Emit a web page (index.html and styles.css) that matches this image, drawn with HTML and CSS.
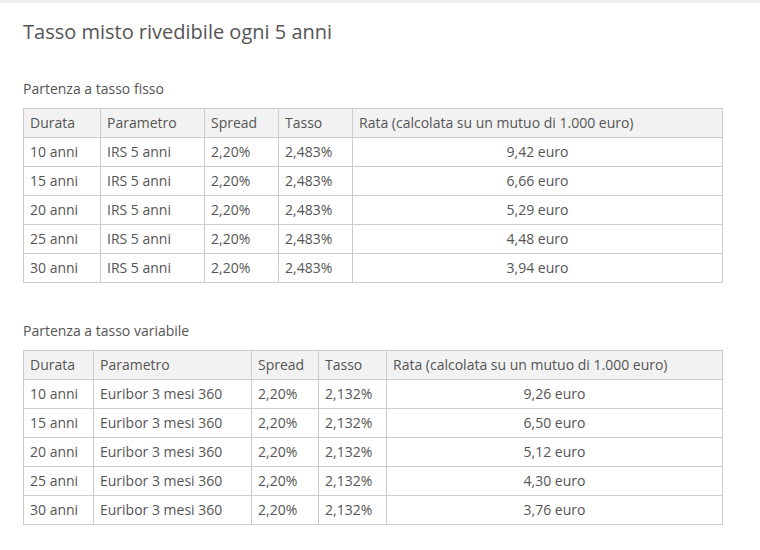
FILE: index.html
```html
<!DOCTYPE html>
<html lang="it">
<head>
<meta charset="utf-8">
<link rel="stylesheet" href="styles.css">
</head>
<body>
<div class="topbar"></div>
<main class="content">
  <h1 class="title">Tasso misto rivedibile ogni 5 anni</h1>

  <section class="block">
    <h2 class="subtitle">Partenza a tasso fisso</h2>
    <table class="rates">
      <colgroup>
        <col class="c-a1"><col class="c-b1"><col class="c-c1"><col class="c-d1"><col>
      </colgroup>
      <thead>
        <tr><th>Durata</th><th>Parametro</th><th>Spread</th><th>Tasso</th><th>Rata (calcolata su un mutuo di 1.000 euro)</th></tr>
      </thead>
      <tbody>
        <tr><td>10 anni</td><td>IRS 5 anni</td><td>2,20%</td><td>2,483%</td><td class="num">9,42 euro</td></tr>
        <tr><td>15 anni</td><td>IRS 5 anni</td><td>2,20%</td><td>2,483%</td><td class="num">6,66 euro</td></tr>
        <tr><td>20 anni</td><td>IRS 5 anni</td><td>2,20%</td><td>2,483%</td><td class="num">5,29 euro</td></tr>
        <tr><td>25 anni</td><td>IRS 5 anni</td><td>2,20%</td><td>2,483%</td><td class="num">4,48 euro</td></tr>
        <tr><td>30 anni</td><td>IRS 5 anni</td><td>2,20%</td><td>2,483%</td><td class="num">3,94 euro</td></tr>
      </tbody>
    </table>
  </section>

  <section class="block">
    <h2 class="subtitle">Partenza a tasso variabile</h2>
    <table class="rates">
      <colgroup>
        <col class="c-a2"><col class="c-b2"><col class="c-c2"><col class="c-d2"><col>
      </colgroup>
      <thead>
        <tr><th>Durata</th><th>Parametro</th><th>Spread</th><th>Tasso</th><th>Rata (calcolata su un mutuo di 1.000 euro)</th></tr>
      </thead>
      <tbody>
        <tr><td>10 anni</td><td>Euribor 3 mesi 360</td><td>2,20%</td><td>2,132%</td><td class="num">9,26 euro</td></tr>
        <tr><td>15 anni</td><td>Euribor 3 mesi 360</td><td>2,20%</td><td>2,132%</td><td class="num">6,50 euro</td></tr>
        <tr><td>20 anni</td><td>Euribor 3 mesi 360</td><td>2,20%</td><td>2,132%</td><td class="num">5,12 euro</td></tr>
        <tr><td>25 anni</td><td>Euribor 3 mesi 360</td><td>2,20%</td><td>2,132%</td><td class="num">4,30 euro</td></tr>
        <tr><td>30 anni</td><td>Euribor 3 mesi 360</td><td>2,20%</td><td>2,132%</td><td class="num">3,76 euro</td></tr>
      </tbody>
    </table>
  </section>
</main>
</body>
</html>
```

FILE: styles.css
```css
html, body {
  margin: 0;
  padding: 0;
  background: #fff;
}
body {
  font-family: "Open Sans", "DejaVu Sans", sans-serif;
  color: #555;
}
.topbar {
  height: 3px;
  background: #eeeeee;
}
.content {
  padding: 0 0 0 23px;
}
.title {
  margin: 15px 0 0;
  font-size: 20px;
  font-weight: 400;
  line-height: 28px;
  color: #555;
}
.subtitle {
  margin: 33px 0 0;
  font-size: 14px;
  font-weight: 400;
  line-height: 20px;
  color: #555;
}
.block + .block .subtitle {
  margin-top: 38px;
}
.rates {
  margin-top: 9px;
  width: 700px;
  border-collapse: collapse;
  table-layout: fixed;
  font-size: 14px;
  line-height: 20px;
  color: #555;
}
.rates th, .rates td {
  border: 1px solid #cccccc;
  padding: 4px 6px;
  text-align: left;
  font-weight: 400;
  white-space: nowrap;
}
.rates th {
  background: #f2f2f2;
}
.rates td.num {
  text-align: center;
}
.c-a1 { width: 77px; }
.c-b1 { width: 104px; }
.c-c1 { width: 74px; }
.c-d1 { width: 74px; }
.c-a2 { width: 70px; }
.c-b2 { width: 158px; }
.c-c2 { width: 67px; }
.c-d2 { width: 68px; }
```
